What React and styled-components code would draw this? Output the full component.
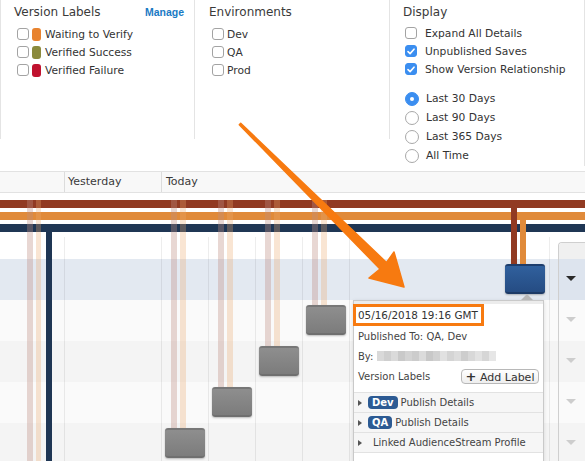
import React from "react";
import styled, { createGlobalStyle } from "styled-components";

const colors = {
  text: "#333",
  line: "#e4e4e4",
  blue: "#3b8ef0",
  link: "#1a7ac4",
  rust: "#913a22",
  amber: "#e08a3a",
  navy: "#1f3654",
  badge: "#2c5a93",
  arrow: "#f77a10",
};

const GlobalStyle = createGlobalStyle`
  html, body { margin: 0; padding: 0; background: #fff; }
  body {
    font-family: "DejaVu Sans", Verdana, sans-serif;
    font-size: 10.7px;
    color: ${colors.text};
  }
`;

const Page = styled.div`
  position: relative;
  width: 585px;
  height: 461px;
  overflow: hidden;
`;

/* ---------- filter panels ---------- */

const Filters = styled.div`
  display: flex;
  height: 171px;
`;

const FilterPanel = styled.section`
  box-sizing: border-box;
  width: ${(p) => p.$width}px;
  height: ${(p) => (p.$tall ? 166 : 139)}px;
  padding: 3px 0 0 ${(p) => p.$pad}px;
  border-left: ${(p) => (p.$edge ? `1px solid ${colors.line}` : "none")};
  border-right: 1px solid ${colors.line};
`;

const PanelHead = styled.div`
  display: flex;
  justify-content: space-between;
  align-items: center;
  height: 18px;
  padding-right: 10px;
`;

const Title = styled.h3`
  margin: 0;
  font-size: 12px;
  font-weight: normal;
  color: #3a3a3a;
`;

const ManageLink = styled.a`
  color: ${colors.link};
  font-family: "Liberation Sans", Arial, sans-serif;
  font-size: 10.5px;
  font-weight: bold;
  text-decoration: none;
`;

const OptionList = styled.div`
  display: flex;
  flex-direction: column;
  margin: ${(p) => p.$top || 4}px 0 0 ${(p) => p.$indent}px;
`;

const Option = styled.label`
  display: flex;
  align-items: center;
  height: ${(p) => p.$h || 18}px;
  gap: ${(p) => p.$gap}px;
  white-space: nowrap;
`;

const Box = styled.span`
  box-sizing: border-box;
  display: inline-flex;
  align-items: center;
  justify-content: center;
  width: 12px;
  height: 12px;
  border-radius: 3px;
  border: 1px solid ${(p) => (p.$checked ? colors.blue : "#a3a3a3")};
  background: ${(p) => (p.$checked ? colors.blue : "#fff")};
`;

const Swatch = styled.span`
  width: 9px;
  height: 13px;
  border-radius: 3px;
  margin-left: -1px;
  background: ${(p) => p.$color};
`;

const Radio = styled.span`
  box-sizing: border-box;
  display: inline-flex;
  align-items: center;
  justify-content: center;
  width: 14px;
  height: 14px;
  border-radius: 50%;
  border: 1px solid ${(p) => (p.$on ? colors.blue : "#a8a8a8")};
  background: ${(p) => (p.$on ? colors.blue : "#fff")};

  &::after {
    content: "";
    display: ${(p) => (p.$on ? "block" : "none")};
    width: 4px;
    height: 4px;
    border-radius: 50%;
    background: #fff;
  }
`;

const Checkbox = ({ checked }) => (
  <Box $checked={checked}>
    {checked && (
      <svg width="8" height="7" viewBox="0 0 8 7">
        <path d="M1 3.6 L3.1 5.6 L7 1.2" fill="none" stroke="#fff" strokeWidth="1.6" strokeLinecap="round" strokeLinejoin="round" />
      </svg>
    )}
  </Box>
);

/* ---------- timeline ---------- */

const DateHeader = styled.div`
  display: flex;
  height: 20px;
  border-top: 1px solid #e2e2e2;
  border-bottom: 1px solid #e2e2e2;
  background: #f8f8f8;
`;

const DateCell = styled.div`
  box-sizing: border-box;
  width: ${(p) => (p.$w ? `${p.$w}px` : "auto")};
  flex: ${(p) => (p.$w ? "none" : 1)};
  padding-left: ${(p) => p.$pad || 4}px;
  border-right: ${(p) => (p.$w ? "1px solid #dcdcdc" : "none")};
  line-height: 20px;
  font-size: 11px;
  color: #3a3a3a;
`;

const Chart = styled.div`
  position: relative;
  display: flex;
  height: 268px;
`;

const Canvas = styled.div`
  flex: 1;
  display: flex;
  flex-direction: column;
`;

const rowTone = {
  active: "#e3e9f1",
  light: "#fafafa",
  dark: "#f4f4f4",
};

const Spacer = styled.div`
  height: 66px;
  flex: none;
`;

const Lane = styled.div`
  height: 41px;
  flex: none;
  background: ${(p) => rowTone[p.$tone]};
`;

const Side = styled.div`
  width: 26px;
  margin-top: 49px;
  border-left: 1px solid #cfcfcf;
  border-top: 1px solid #cfcfcf;
  border-top-left-radius: 4px;
  display: flex;
  flex-direction: column;
  overflow: hidden;
`;

const SideHead = styled.div`
  height: 16px;
  flex: none;
  background: #f0f0f0;
`;

const SideRow = styled.div`
  height: 41px;
  flex: none;
  display: flex;
  align-items: center;
  justify-content: center;
  padding-right: 2px;
  background: ${(p) => (p.$tone === "active" ? "#dde4ee" : rowTone[p.$tone])};

  &::after {
    content: "";
    margin-top: -2px;
    border-left: 5px solid transparent;
    border-right: 5px solid transparent;
    border-top: 5px solid ${(p) => (p.$tone === "active" ? "#2a2a2a" : "#cdcdcd")};
  }
`;

const Bar = styled.div`
  position: absolute;
  left: 0;
  right: 0;
  top: ${(p) => p.$y}px;
  height: 8px;
  background: ${(p) => p.$color};
`;

const GridLine = styled.div`
  position: absolute;
  left: ${(p) => p.$x}px;
  top: 44px;
  bottom: 0;
  width: 1px;
  background: rgba(0, 0, 0, 0.07);
`;

const Trace = styled.div`
  position: absolute;
  left: ${(p) => p.$x}px;
  top: ${(p) => p.$top}px;
  width: ${(p) => p.$w || 6}px;
  height: ${(p) => (p.$h ? `${p.$h}px` : "auto")};
  bottom: ${(p) => (p.$h ? "auto" : "0")};
  background: ${(p) => p.$color};
`;

const VersionNode = styled.div`
  position: absolute;
  left: ${(p) => p.$x}px;
  top: ${(p) => p.$y}px;
  box-sizing: border-box;
  width: 40px;
  height: 30px;
  border-radius: 3px;
  border-top: 2px solid ${(p) => (p.$published ? "#1d3d6c" : "#777")};
  border-bottom: 2px solid ${(p) => (p.$published ? "#1c3a66" : "#6f6f6f")};
  background: ${(p) =>
    p.$published
      ? "linear-gradient(#30609d, #254c83)"
      : "linear-gradient(#8e8e8e, #7c7c7c)"};
  box-shadow: 0 1px 2px rgba(0, 0, 0, 0.25);
`;

/* ---------- popover ---------- */

const Popover = styled.div`
  position: absolute;
  left: 353px;
  top: 107px;
  width: 191px;
  bottom: -10px;
  box-sizing: border-box;
  border: 1px solid #c9c9c9;
  background: #fff;
  box-shadow: 0 1px 4px rgba(0, 0, 0, 0.12);
  font-size: 10px;
  color: #444;

  &::before {
    content: "";
    position: absolute;
    top: -7px;
    left: 167px;
    border-left: 6px solid transparent;
    border-right: 6px solid transparent;
    border-bottom: 6px solid #b7b7b7;
  }
`;

const PopStrip = styled.div`
  height: 3px;
  background: #ececec;
`;

const DateStamp = styled.div`
  display: inline-block;
  box-sizing: border-box;
  margin-left: -1px;
  width: 131px;
  height: 22px;
  padding-left: 2px;
  border: 3px solid ${colors.arrow};
  line-height: 16px;
  font-size: 10.4px;
  color: #333;
  white-space: nowrap;
`;

const InfoRow = styled.div`
  display: flex;
  align-items: center;
  justify-content: ${(p) => (p.$spread ? "space-between" : "flex-start")};
  height: 20px;
  padding: 0 4px;
  white-space: nowrap;
`;

const Mosaic = styled.span`
  display: inline-flex;
  margin-left: 4px;
  height: 10px;
`;

const Pixel = styled.span`
  width: 7px;
  height: 10px;
  background: ${(p) => p.$shade};
`;

const LabelButton = styled.button`
  box-sizing: border-box;
  height: 15px;
  width: 78px;
  padding: 0;
  border: 1px solid #b8b8b8;
  border-radius: 4px;
  background: linear-gradient(#ffffff, #eeeeee);
  font-family: inherit;
  font-size: 11px;
  line-height: 13px;
  color: #333;

  b {
    font-size: 13px;
  }
`;

const Accordion = styled.div`
  margin-top: 6px;
  border-bottom: 1px solid #e2e2e2;
`;

const Section = styled.div`
  display: flex;
  align-items: center;
  gap: 3px;
  height: 19px;
  padding-left: 4px;
  border-top: 1px solid #e2e2e2;
  background: #f6f6f6;
  white-space: nowrap;

  &::before {
    content: "";
    border-top: 3px solid transparent;
    border-bottom: 3px solid transparent;
    border-left: 4px solid #555;
    margin-right: ${(p) => (p.$plain ? 8 : 3)}px;
  }
`;

const EnvBadge = styled.span`
  display: inline-block;
  padding: 0 4px;
  height: 13px;
  line-height: 13px;
  border-radius: 4px;
  background: ${colors.badge};
  color: #fff;
  font-weight: bold;
  font-size: 10px;
`;

const Annotation = styled.svg`
  position: absolute;
  left: 0;
  top: 0;
  pointer-events: none;
`;

/* ---------- data ---------- */

const versionLabels = [
  { name: "Waiting to Verify", color: "#e8832f" },
  { name: "Verified Success", color: "#8b8a3c" },
  { name: "Verified Failure", color: "#c0122f" },
];

const environments = ["Dev", "QA", "Prod"];

const displayOptions = [
  { name: "Expand All Details", checked: false },
  { name: "Unpublished Saves", checked: true },
  { name: "Show Version Relationship", checked: true },
];

const ranges = ["Last 30 Days", "Last 90 Days", "Last 365 Days", "All Time"];

const lanes = ["active", "light", "dark", "light", "dark"];

const gridXs = [64, 161, 208, 255, 302, 349, 549];

const faintRust = "rgba(190, 140, 130, 0.35)";
const faintAmber = "rgba(235, 170, 110, 0.3)";

const savedVersions = [
  { x: 165, y: 235 },
  { x: 212, y: 194 },
  { x: 259, y: 153 },
  { x: 306, y: 112 },
];

const mosaicShades = [
  "#d9d9d9", "#cfcfcf", "#dadada", "#c9c9c9", "#d3d3d3", "#cccccc",
  "#dbdbdb", "#c8c8c8", "#d1d1d1", "#e1e1e1", "#d4d4d4", "#dcdcdc",
  "#cdcdcd", "#d8d8d8", "#e2e2e2", "#d6d6d6", "#e6e6e6",
];

export default function App() {
  return (
    <Page>
      <GlobalStyle />
      <Filters>
        <FilterPanel $width={195} $pad={13} $edge>
          <PanelHead>
            <Title>Version Labels</Title>
            <ManageLink href="#">Manage</ManageLink>
          </PanelHead>
          <OptionList $indent={3}>
            {versionLabels.map((l) => (
              <Option key={l.name} $gap={4}>
                <Checkbox />
                <Swatch $color={l.color} />
                {l.name}
              </Option>
            ))}
          </OptionList>
        </FilterPanel>

        <FilterPanel $width={195} $pad={14}>
          <PanelHead>
            <Title>Environments</Title>
          </PanelHead>
          <OptionList $indent={3}>
            {environments.map((e) => (
              <Option key={e} $gap={3}>
                <Checkbox />
                {e}
              </Option>
            ))}
          </OptionList>
        </FilterPanel>

        <FilterPanel $width={195} $pad={13} $tall>
          <PanelHead>
            <Title>Display</Title>
          </PanelHead>
          <OptionList $indent={2} $top={3}>
            {displayOptions.map((o) => (
              <Option key={o.name} $gap={8}>
                <Checkbox checked={o.checked} />
                {o.name}
              </Option>
            ))}
          </OptionList>
          <OptionList $indent={2} $top={11}>
            {ranges.map((r, i) => (
              <Option key={r} $gap={7} $h={19}>
                <Radio $on={i === 0} />
                {r}
              </Option>
            ))}
          </OptionList>
        </FilterPanel>
      </Filters>

      <DateHeader>
        <DateCell $w={65} />
        <DateCell $w={97} $pad={3}>Yesterday</DateCell>
        <DateCell>Today</DateCell>
      </DateHeader>

      <Chart>
        <Canvas>
          <Spacer />
          {lanes.map((tone, i) => (
            <Lane key={i} $tone={tone} />
          ))}
        </Canvas>
        <Side>
          <SideHead />
          {lanes.map((tone, i) => (
            <SideRow key={i} $tone={tone} />
          ))}
        </Side>

        {gridXs.map((x) => (
          <GridLine key={x} $x={x} />
        ))}

        <Bar $y={7} $color={colors.rust} />
        <Bar $y={19} $color={colors.amber} />
        <Bar $y={31} $color={colors.navy} />

        <Trace $x={27} $top={7} $color={faintRust} />
        <Trace $x={36} $top={7} $w={5} $color={faintAmber} />
        <Trace $x={46} $top={31} $color={colors.navy} />

        {savedVersions.map((v) => (
          <React.Fragment key={v.x}>
            <Trace $x={v.x + 6} $top={7} $h={v.y - 7} $color={faintRust} />
            <Trace $x={v.x + 15} $top={7} $h={v.y - 7} $color={faintAmber} />
            <VersionNode $x={v.x} $y={v.y} />
          </React.Fragment>
        ))}

        <Trace $x={511} $top={7} $h={65} $color={colors.rust} />
        <Trace $x={520} $top={19} $h={53} $color={colors.amber} />
        <VersionNode $x={505} $y={71} $published />

        <Popover>
          <PopStrip />
          <DateStamp>05/16/2018 19:16 GMT</DateStamp>
          <InfoRow>Published To: QA, Dev</InfoRow>
          <InfoRow>
            By:
            <Mosaic>
              {mosaicShades.map((s, i) => (
                <Pixel key={i} $shade={s} />
              ))}
            </Mosaic>
          </InfoRow>
          <InfoRow $spread>
            Version Labels
            <LabelButton>
              <b>+</b> Add Label
            </LabelButton>
          </InfoRow>
          <Accordion>
            <Section>
              <EnvBadge>Dev</EnvBadge>
              Publish Details
            </Section>
            <Section>
              <EnvBadge>QA</EnvBadge>
              Publish Details
            </Section>
            <Section $plain>Linked AudienceStream Profile</Section>
          </Accordion>
        </Popover>
      </Chart>

      <Annotation width="585" height="461" viewBox="0 0 585 461">
        <polygon
          points="239.3,124.7 380,269 369,278 404,287 394,252 386.5,262.5 240.7,123.3"
          fill={colors.arrow}
          stroke={colors.arrow}
          strokeWidth="1.5"
          strokeLinejoin="round"
        />
      </Annotation>
    </Page>
  );
}
